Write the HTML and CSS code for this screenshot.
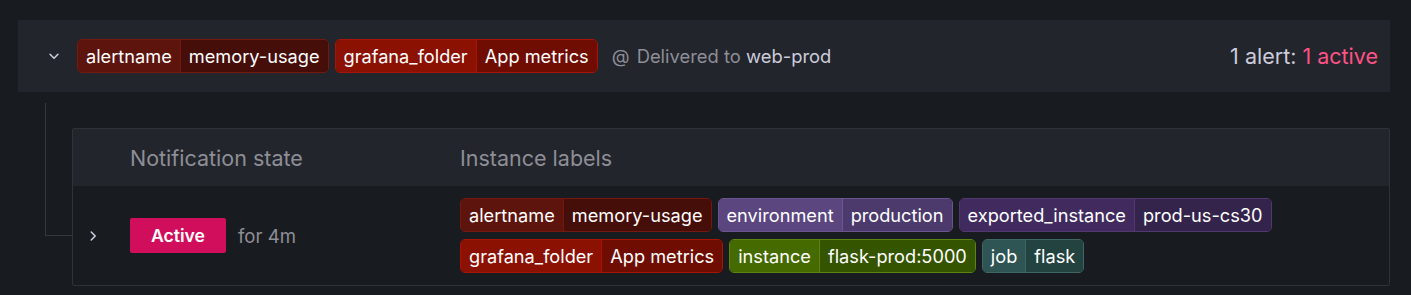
FILE: index.html
```html
<!DOCTYPE html>
<html lang="en">
<head>
    <meta charset="UTF-8">
    <title>Alert group</title>
    <link rel="stylesheet" href="styles.css">
</head>
<body>
    <div class="alert-group">
        <div class="group-header">
            <span class="toggle">
                <svg width="14" height="14" viewBox="0 0 16 16"><path d="M3.5 6l4.5 4.5L12.5 6" fill="none" stroke="#ccccdc" stroke-width="1.8" stroke-linecap="round" stroke-linejoin="round"/></svg>
            </span>
            <div class="labels">
                <span class="label red-dark"><span class="key">alertname</span><span class="value">memory-usage</span></span>
                <span class="label red"><span class="key">grafana_folder</span><span class="value">App metrics</span></span>
            </div>
            <span class="delivered"><span class="at">@</span> Delivered to <span class="contact">web-prod</span></span>
            <span class="summary">1 alert: <span class="active-count">1 active</span></span>
        </div>

        <div class="group-body">
            <div class="tree-line"></div>
            <div class="alert-table">
                <div class="table-head">
                    <div class="col-toggle"></div>
                    <div class="col-state">Notification state</div>
                    <div class="col-labels">Instance labels</div>
                </div>
                <div class="table-row">
                    <div class="col-toggle">
                        <svg width="14" height="14" viewBox="0 0 16 16"><path d="M6 3.5l4.5 4.5L6 12.5" fill="none" stroke="#ccccdc" stroke-width="1.8" stroke-linecap="round" stroke-linejoin="round"/></svg>
                    </div>
                    <div class="col-state">
                        <span class="state-badge">Active</span>
                        <span class="duration">for 4m</span>
                    </div>
                    <div class="col-labels labels wrap">
                        <span class="label red-dark"><span class="key">alertname</span><span class="value">memory-usage</span></span>
                        <span class="label purple"><span class="key">environment</span><span class="value">production</span></span>
                        <span class="label violet"><span class="key">exported_instance</span><span class="value">prod-us-cs30</span></span>
                        <span class="label red"><span class="key">grafana_folder</span><span class="value">App metrics</span></span>
                        <span class="label green"><span class="key">instance</span><span class="value">flask-prod:5000</span></span>
                        <span class="label teal"><span class="key">job</span><span class="value">flask</span></span>
                    </div>
                </div>
            </div>
        </div>
    </div>
</body>
</html>
```

FILE: styles.css
```css
body {
    margin: 0;
    padding: 20px 21px 0 18px;
    background-color: #181b1f;
    color: #ccccdc;
    font-family: Inter, "Noto Sans", sans-serif;
    font-size: 21.5px;
}

.group-header {
    height: 72px;
    background: #22252b;
    display: flex;
    align-items: center;
    padding: 0 12px 0 29px;
}

.toggle {
    display: flex;
    width: 30px;
}

.labels {
    display: flex;
    gap: 7px 6px;
}

.labels.wrap {
    flex-wrap: wrap;
}

.label {
    display: inline-flex;
    height: 34px;
    box-sizing: border-box;
    border: 1px solid;
    border-radius: 5px;
    font-size: 18.2px;
    color: #ffffff;
    overflow: hidden;
}

.label .key,
.label .value {
    display: flex;
    align-items: center;
    padding: 0 8px;
}

.label .value {
    border-left: 1px solid;
    border-color: inherit;
}

.red-dark { border-color: #76180f; }
.red-dark .key { background: #5c140d; }
.red-dark .value { background: #450e09; }

.red { border-color: #a81306; }
.red .key { background: #8b1103; }
.red .value { background: #6f0d02; }

.purple { border-color: #6a5591; }
.purple .key { background: #5b4680; }
.purple .value { background: #4b3a6b; }

.violet { border-color: #51386e; }
.violet .key { background: #412b5e; }
.violet .value { background: #34234b; }

.green { border-color: #5b8410; }
.green .key { background: #456b00; }
.green .value { background: #355400; }

.teal { border-color: #3e6664; }
.teal .key { background: #2e5553; }
.teal .value { background: #234341; }

.delivered {
    margin-left: 14px;
    font-size: 18.4px;
    color: #8e8e96;
}

.delivered .at {
    margin-right: 2px;
}

.delivered .contact {
    color: #ccccdc;
}

.summary {
    margin-left: auto;
}

.active-count {
    color: #ff5286;
}

.group-body {
    display: flex;
    margin: 11px 0 0 27px;
}

.tree-line {
    flex: none;
    width: 26px;
    height: 132px;
    border-left: 1px solid #34373d;
    border-bottom: 1px solid #34373d;
}

.alert-table {
    flex: 1;
    margin-top: 25px;
    border: 1px solid #2f3237;
    border-radius: 2px;
}

.table-head {
    display: flex;
    align-items: center;
    height: 57px;
    background: #22252b;
    color: #8e8e96;
}

.table-row {
    display: flex;
    align-items: center;
    padding: 12px 0;
}

.col-toggle {
    flex: none;
    width: 57px;
    display: flex;
    padding-left: 13px;
    box-sizing: border-box;
}

.col-state {
    flex: none;
    width: 330px;
    display: flex;
    align-items: center;
}

.col-labels {
    flex: 1;
}

.state-badge {
    display: inline-flex;
    align-items: center;
    justify-content: center;
    width: 96px;
    height: 35px;
    background: #d10e5c;
    color: #ffffff;
    border-radius: 2px;
    font-size: 17.6px;
    font-weight: 600;
}

.duration {
    margin-left: 12px;
    font-size: 18.6px;
    color: #8e8e96;
}
```
